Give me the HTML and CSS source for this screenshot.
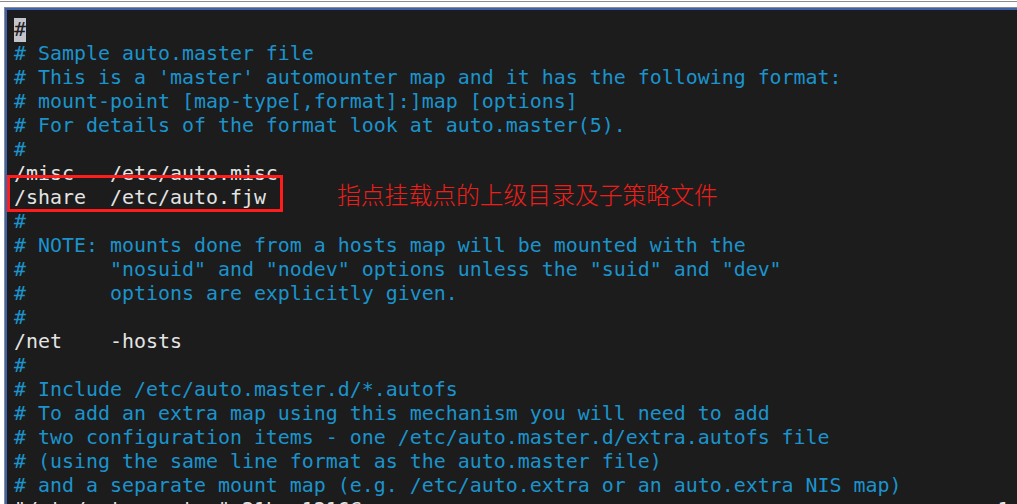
FILE: index.html
```html
<!DOCTYPE html>
<html lang="en">
<head>
    <meta charset="UTF-8">
    <meta name="viewport" content="width=device-width, initial-scale=1.0">
    <title>auto.master</title>
    <link rel="stylesheet" href="styles.css">
</head>
<body>
    <div class="topline"></div>
    <div class="window">
        <div class="term">
<pre class="buffer"><span class="c"><span class="cursor">#</span></span>
<span class="c"># Sample auto.master file</span>
<span class="c"># This is a 'master' automounter map and it has the following format:</span>
<span class="c"># mount-point [map-type[,format]:]map [options]</span>
<span class="c"># For details of the format look at auto.master(5).</span>
<span class="c">#</span>
/misc   /etc/auto.misc
/share  /etc/auto.fjw
<span class="c">#</span>
<span class="c"># NOTE: mounts done from a hosts map will be mounted with the</span>
<span class="c">#       "nosuid" and "nodev" options unless the "suid" and "dev"</span>
<span class="c">#       options are explicitly given.</span>
<span class="c">#</span>
/net    -hosts
<span class="c">#</span>
<span class="c"># Include /etc/auto.master.d/*.autofs</span>
<span class="c"># To add an extra map using this mechanism you will need to add</span>
<span class="c"># two configuration items - one /etc/auto.master.d/extra.autofs file</span>
<span class="c"># (using the same line format as the auto.master file)</span>
<span class="c"># and a separate mount map (e.g. /etc/auto.extra or an auto.extra NIS map)</span>
"/etc/auto.master" 21L, 1216C                                                     1,1           All</pre>
            <div class="mark"></div>
            <div class="note">指点挂载点的上级目录及子策略文件</div>
        </div>
    </div>
</body>
</html>
```

FILE: styles.css
```css
html, body {
    margin: 0;
    height: 504px;
    overflow: hidden;
    background: #ffffff;
}
.topline {
    margin-top: 1px;
    height: 1px;
    background: #8c8c8c;
}
.window {
    margin-top: 5px;
    margin-left: 4px;
    border-top: 1px solid #8c8c8c;
    border-left: 1px solid #8c8c8c;
    height: 500px;
}
.term {
    position: relative;
    height: 100%;
    background: #1c1c1c;
    border-top: 2px solid #3d63ae;
    border-left: 2px solid #3d63ae;
    overflow: hidden;
}
.buffer {
    margin: 0;
    padding: 8px 0 0 7px;
    font-family: "DejaVu Sans Mono", monospace;
    font-size: 19.93px;
    line-height: 24px;
    color: #e4e4e4;
    white-space: pre;
}
.c {
    color: #1b93cc;
}
.cursor {
    display: inline-block;
    height: 24px;
    vertical-align: top;
    background: #c4c4cc;
    color: #1c1c1c;
}
.mark {
    position: absolute;
    left: 0;
    top: 165px;
    width: 270px;
    height: 31px;
    border: 3px solid #ff1c1c;
}
.note {
    position: absolute;
    left: 330px;
    top: 172px;
    font-family: "Noto Sans CJK SC", sans-serif;
    font-weight: 300;
    font-size: 23.8px;
    line-height: 24px;
    color: #ee1e1a;
}
```
